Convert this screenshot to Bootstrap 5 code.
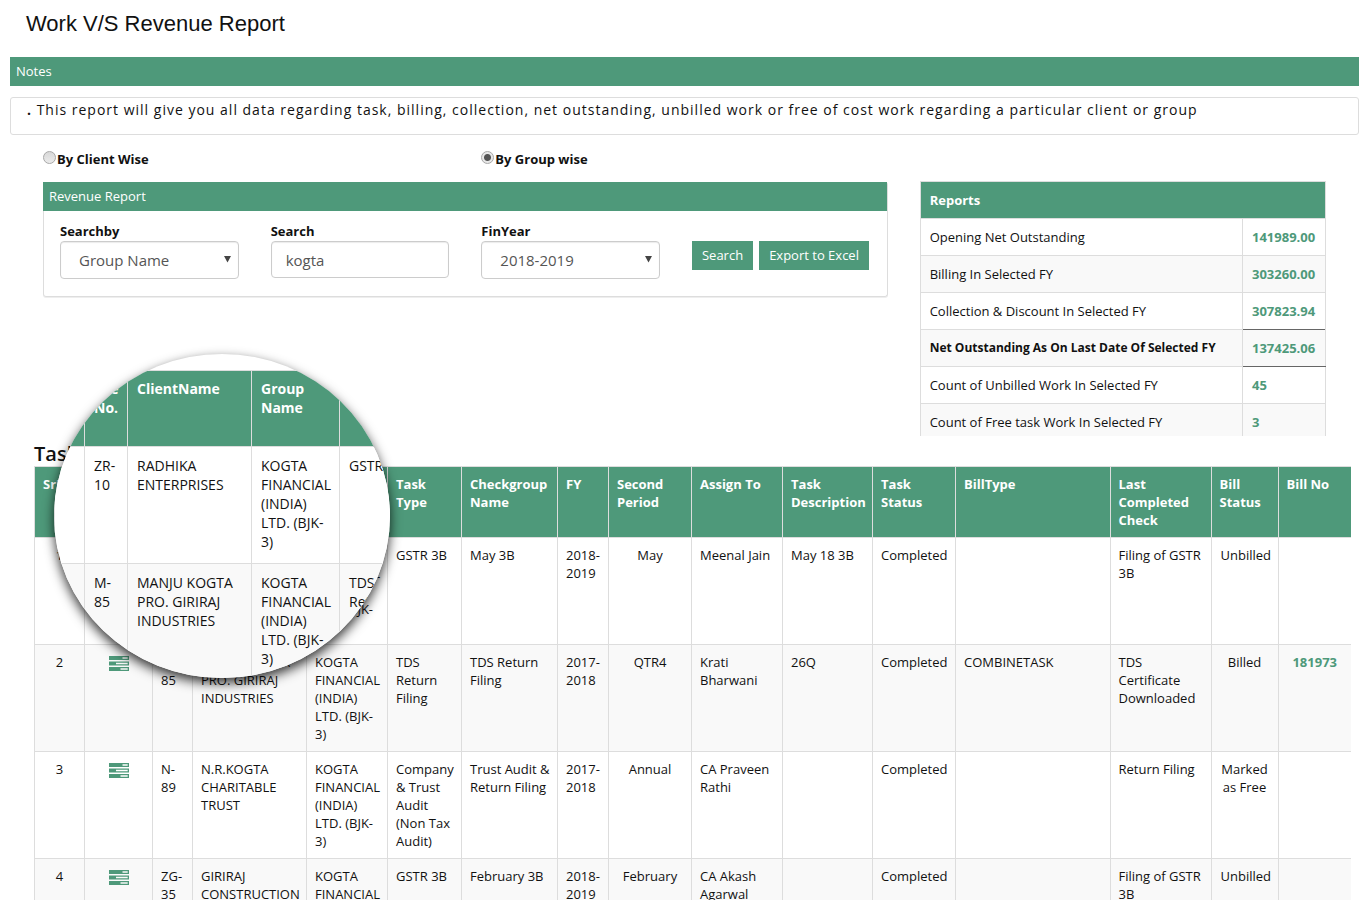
<!DOCTYPE html>
<html lang="en">
<head>
<meta charset="utf-8">
<meta name="viewport" content="width=device-width, initial-scale=1">
<title>Work V/S Revenue Report</title>
<link href="https://cdn.jsdelivr.net/npm/bootstrap@5.3.0/dist/css/bootstrap.min.css" rel="stylesheet">
<style>
  :root { --brand: #4e997a; --line: #dddddd; }
  body { font: 13px/18px "Open Sans", sans-serif; color: #111; background: #fff; }
  .page { padding: 9px 7px 0 10px; }
  .page-title { font: 22px/30px "Liberation Sans", sans-serif; color: #111; padding-left: 16px; margin-bottom: 18px; }
  .bar { background: var(--brand); color: #fff; line-height: 29px; padding: 0 6px; }
  .note-box { font-size: 14px; border: 1px solid var(--line); border-radius: 3px; margin-top: 11px; padding: 3px 16px 15px; letter-spacing: 1px; }
  .content { padding: 0 33px; }
  .gut { --bs-gutter-x: 32px; }
  .radios { padding: 15px 0 12px; }
  .radio-line { display: flex; gap: 1px; line-height: 19px; font-weight: 700; }
  .radio-line input { appearance: none; flex: none; width: 13px; height: 13px; margin: 1px 0 0; border: 1px solid #a8a8a8; border-radius: 50%; background: linear-gradient(#d8d8d8, #ebebeb); }
  .radio-line input:checked { background: radial-gradient(circle, #555 0 3px, #e8e8e8 4px); }
  .panel { border: 1px solid var(--line); border-top: 0; border-radius: 3px; margin-top: 1px; box-shadow: 0 1px 0 #eee; }
  .panel .bar { margin-left: -1px; }
  .panel-fields { padding: 10px 0 17px; margin: 0; }
  .field-label { display: block; font-weight: 700; line-height: 20px; }
  .field { font-size: 15px; line-height: 22px; color: #555; border: 1px solid #ccc; border-radius: 4px; width: 100%; height: 37px; padding: 0 14px; background: #fff; box-shadow: inset 0 1px 1px rgba(0,0,0,.08); }
  select.field { appearance: none; height: 38px; padding: 0 18px; background: #fff url("data:image/svg+xml,%3Csvg xmlns='http://www.w3.org/2000/svg' width='7' height='8'%3E%3Cpath d='M0 1h7L3.500 7.500z' fill='%23444'/%3E%3C/svg%3E") no-repeat right 7px top 13px; }
  .btn-brand { --bs-btn-color: #fff; --bs-btn-bg: var(--brand); --bs-btn-hover-color: #fff; --bs-btn-hover-bg: #3f8468; --bs-btn-border-radius: 0; --bs-btn-font-size: 13px; --bs-btn-line-height: 29px; --bs-btn-padding-x: 10px; --bs-btn-padding-y: 0; --bs-btn-border-width: 0; white-space: nowrap; }
  .actions { gap: 6px; padding-top: 20px; }
  .grid-table { --bs-table-bg: transparent; border-color: var(--line); color: #111; margin: 0; }
  .grid-table > :not(caption) > * > * { padding: 8px 9px; color: inherit; box-shadow: none; vertical-align: top; }
  .grid-table > thead > tr > th { background: var(--brand); color: #fff; font-weight: 700; }
  .grid-table > tbody > tr { background: #fff; }
  .grid-table > tbody > tr:nth-child(even) { background: #f9f9f9; }
  .grid-table > tbody > tr > .sum-value, .grid-table a { color: var(--brand); font-weight: 700; text-decoration: none; }
  .report-scroll { max-height: 255px; overflow: hidden; }
  .report-table { line-height: 20px; }
  .report-table .sum-value { width: 83px; }
  .grid-table .total-row td { font-size: 12px; font-weight: 700; }
  .grid-table .total-row .sum-value { font-size: 13px; border-top: 1px solid #666; border-bottom: 1px solid #666; }
  .tasks { position: relative; margin: 6px 8px 0 24px; }
  .tasks-title { font-size: 20px; line-height: 24px; font-weight: 600; margin: 0; }
  .task-table { table-layout: fixed; border-right-width: 0; }
  .task-table tr > :last-child { border-right-width: 0; }
  .grid-table.task-table > :not(caption) > * > :not(.text-center) { padding: 8px 4px 8px 8px; }
  .task-table tbody tr { height: 107px; }
  .w-40 { width: 40px; } .w-50p { width: 50px; } .w-51 { width: 51px; } .w-67 { width: 67px; } .w-68 { width: 68px; }
  .w-73 { width: 73px; } .w-74 { width: 74px; } .w-81 { width: 81px; } .w-83 { width: 83px; } .w-90 { width: 90px; }
  .w-91 { width: 91px; } .w-96 { width: 96px; } .w-101 { width: 101px; } .w-114 { width: 114px; }
  .lens { position: absolute; left: 20px; top: -88px; width: 336px; height: 324px; border-radius: 50%; overflow: hidden; background: #fff; padding-top: 16px; z-index: 2; box-shadow: 0 5px 12px rgba(0,0,0,.8); }
  .lens-table { table-layout: fixed; width: 365px; font-size: 14px; line-height: 19px; }
  .lens-table th { height: 76px; font-size: 14px; }
  .lens-table td { height: 117px; }
  .grid-table.lens-table > tbody > tr > td { padding-top: 9px; }
  .l-30 { width: 30px; } .l-43 { width: 43px; } .l-124 { width: 124px; } .l-88 { width: 88px; }
</style>
</head>
<body>
<svg class="d-none" aria-hidden="true">
  <symbol id="tasks-icon" viewBox="0 0 20 15">
    <path fill="#4e997a" fill-rule="evenodd" d="M0 0h20v4H0zM13.500 1.300v1.400H18.700V1.300zM0 5.500h20v4H0zM7 6.800v1.400H18.700V6.800zM0 11h20v4H0zM11.500 12.300v1.400H18.700V12.300z"/>
  </symbol>
</svg>
<main class="page">
  <h1 class="page-title">Work V/S Revenue Report</h1>
  <div class="bar">Notes</div>
  <div class="note-box"><b>.</b> This report will give you all data regarding task, billing, collection, net outstanding, unbilled work or free of cost work regarding a particular client or group</div>

  <div class="content">
    <div class="row gut">
      <div class="col-8">
        <div class="row gut radios">
          <div class="col-6 radio-line"><input type="radio" name="mode" id="byClient"><label for="byClient">By Client Wise</label></div>
          <div class="col-6 radio-line"><input type="radio" name="mode" id="byGroup" checked><label for="byGroup">By Group wise</label></div>
        </div>
      </div>
    </div>
    <div class="row gut">
      <div class="col-8">
        <section class="panel">
          <div class="bar">Revenue Report</div>
          <form class="row gut panel-fields">
            <div class="col-3">
              <label class="field-label" for="searchBy">Searchby</label>
              <select class="field" id="searchBy"><option>Group Name</option></select>
            </div>
            <div class="col-3">
              <label class="field-label" for="term">Search</label>
              <input class="field" id="term" type="text" value="kogta">
            </div>
            <div class="col-3">
              <label class="field-label" for="finYear">FinYear</label>
              <select class="field" id="finYear"><option>2018-2019</option></select>
            </div>
            <div class="col-3 d-flex align-items-start actions">
              <button type="button" class="btn btn-brand">Search</button>
              <button type="button" class="btn btn-brand">Export to Excel</button>
            </div>
          </form>
        </section>
      </div>
      <div class="col-4">
        <div class="report-scroll">
          <table class="table table-bordered grid-table report-table">
            <thead><tr><th colspan="2">Reports</th></tr></thead>
            <tbody>
              <tr><td>Opening Net Outstanding</td><td class="sum-value">141989.00</td></tr>
              <tr><td>Billing In Selected FY</td><td class="sum-value">303260.00</td></tr>
              <tr><td>Collection &amp; Discount In Selected FY</td><td class="sum-value">307823.94</td></tr>
              <tr class="total-row"><td>Net Outstanding As On Last Date Of Selected FY</td><td class="sum-value">137425.06</td></tr>
              <tr><td>Count of Unbilled Work In Selected FY</td><td class="sum-value">45</td></tr>
              <tr><td>Count of Free task Work In Selected FY</td><td class="sum-value">3</td></tr>
            </tbody>
          </table>
        </div>
      </div>
    </div>
  </div>

  <section class="tasks">
    <h2 class="tasks-title">Task Details</h2>
    <table class="table table-bordered grid-table task-table">
      <colgroup><col class="w-50p"><col class="w-68"><col class="w-40"><col class="w-114"><col class="w-81"><col class="w-74"><col class="w-96"><col class="w-51"><col class="w-83"><col class="w-91"><col class="w-90"><col class="w-83"><col><col class="w-101"><col class="w-67"><col class="w-73"></colgroup>
      <thead>
        <tr><th>SrNo</th><th></th><th>File No.</th><th>ClientName</th><th>Group Name</th><th>Task Type</th><th>Checkgroup Name</th><th>FY</th><th>Second Period</th><th>Assign To</th><th>Task Description</th><th>Task Status</th><th>BillType</th><th>Last Completed Check</th><th>Bill Status</th><th>Bill No</th></tr>
      </thead>
      <tbody>
        <tr><td class="text-center">1</td><td class="text-center"><svg width="20" height="15"><use href="#tasks-icon"/></svg></td><td>ZR-10</td><td>RADHIKA ENTERPRISES</td><td>KOGTA FINANCIAL (INDIA) LTD. (BJK-3)</td><td>GSTR 3B</td><td>May 3B</td><td>2018-2019</td><td class="text-center">May</td><td>Meenal Jain</td><td>May 18 3B</td><td>Completed</td><td></td><td>Filing of GSTR 3B</td><td class="text-center">Unbilled</td><td></td></tr>
        <tr><td class="text-center">2</td><td class="text-center"><svg width="20" height="15"><use href="#tasks-icon"/></svg></td><td>M-85</td><td>MANJU KOGTA PRO. GIRIRAJ INDUSTRIES</td><td>KOGTA FINANCIAL (INDIA) LTD. (BJK-3)</td><td>TDS Return Filing</td><td>TDS Return Filing</td><td>2017-2018</td><td class="text-center">QTR4</td><td>Krati Bharwani</td><td>26Q</td><td>Completed</td><td>COMBINETASK</td><td>TDS Certificate Downloaded</td><td class="text-center">Billed</td><td class="text-center"><a href="#">181973</a></td></tr>
        <tr><td class="text-center">3</td><td class="text-center"><svg width="20" height="15"><use href="#tasks-icon"/></svg></td><td>N-89</td><td>N.R.KOGTA CHARITABLE TRUST</td><td>KOGTA FINANCIAL (INDIA) LTD. (BJK-3)</td><td>Company &amp; Trust Audit (Non Tax Audit)</td><td>Trust Audit &amp; Return Filing</td><td>2017-2018</td><td class="text-center">Annual</td><td>CA Praveen Rathi</td><td></td><td>Completed</td><td></td><td>Return Filing</td><td class="text-center">Marked as Free</td><td></td></tr>
        <tr><td class="text-center">4</td><td class="text-center"><svg width="20" height="15"><use href="#tasks-icon"/></svg></td><td>ZG-35</td><td>GIRIRAJ CONSTRUCTION</td><td>KOGTA FINANCIAL</td><td>GSTR 3B</td><td>February 3B</td><td>2018-2019</td><td class="text-center">February</td><td>CA Akash Agarwal</td><td></td><td>Completed</td><td></td><td>Filing of GSTR 3B</td><td class="text-center">Unbilled</td><td></td></tr>
      </tbody>
    </table>

    <!-- Magnifier over the client columns -->
    <div class="lens" aria-hidden="true">
      <table class="table table-bordered grid-table lens-table">
        <colgroup><col class="l-30"><col class="l-43"><col class="l-124"><col class="l-88"><col></colgroup>
        <thead><tr><th></th><th>File No.</th><th>ClientName</th><th>Group Name</th><th></th></tr></thead>
        <tbody>
          <tr><td></td><td>ZR-10</td><td>RADHIKA ENTERPRISES</td><td>KOGTA FINANCIAL (INDIA) LTD. (BJK-3)</td><td>GSTR 3B</td></tr>
          <tr><td></td><td>M-85</td><td>MANJU KOGTA PRO. GIRIRAJ INDUSTRIES</td><td>KOGTA FINANCIAL (INDIA) LTD. (BJK-3)</td><td>TDS Return</td></tr>
        </tbody>
      </table>
    </div>
  </section>
</main>
<script src="https://cdn.jsdelivr.net/npm/bootstrap@5.3.0/dist/js/bootstrap.bundle.min.js"></script>
</body>
</html>
